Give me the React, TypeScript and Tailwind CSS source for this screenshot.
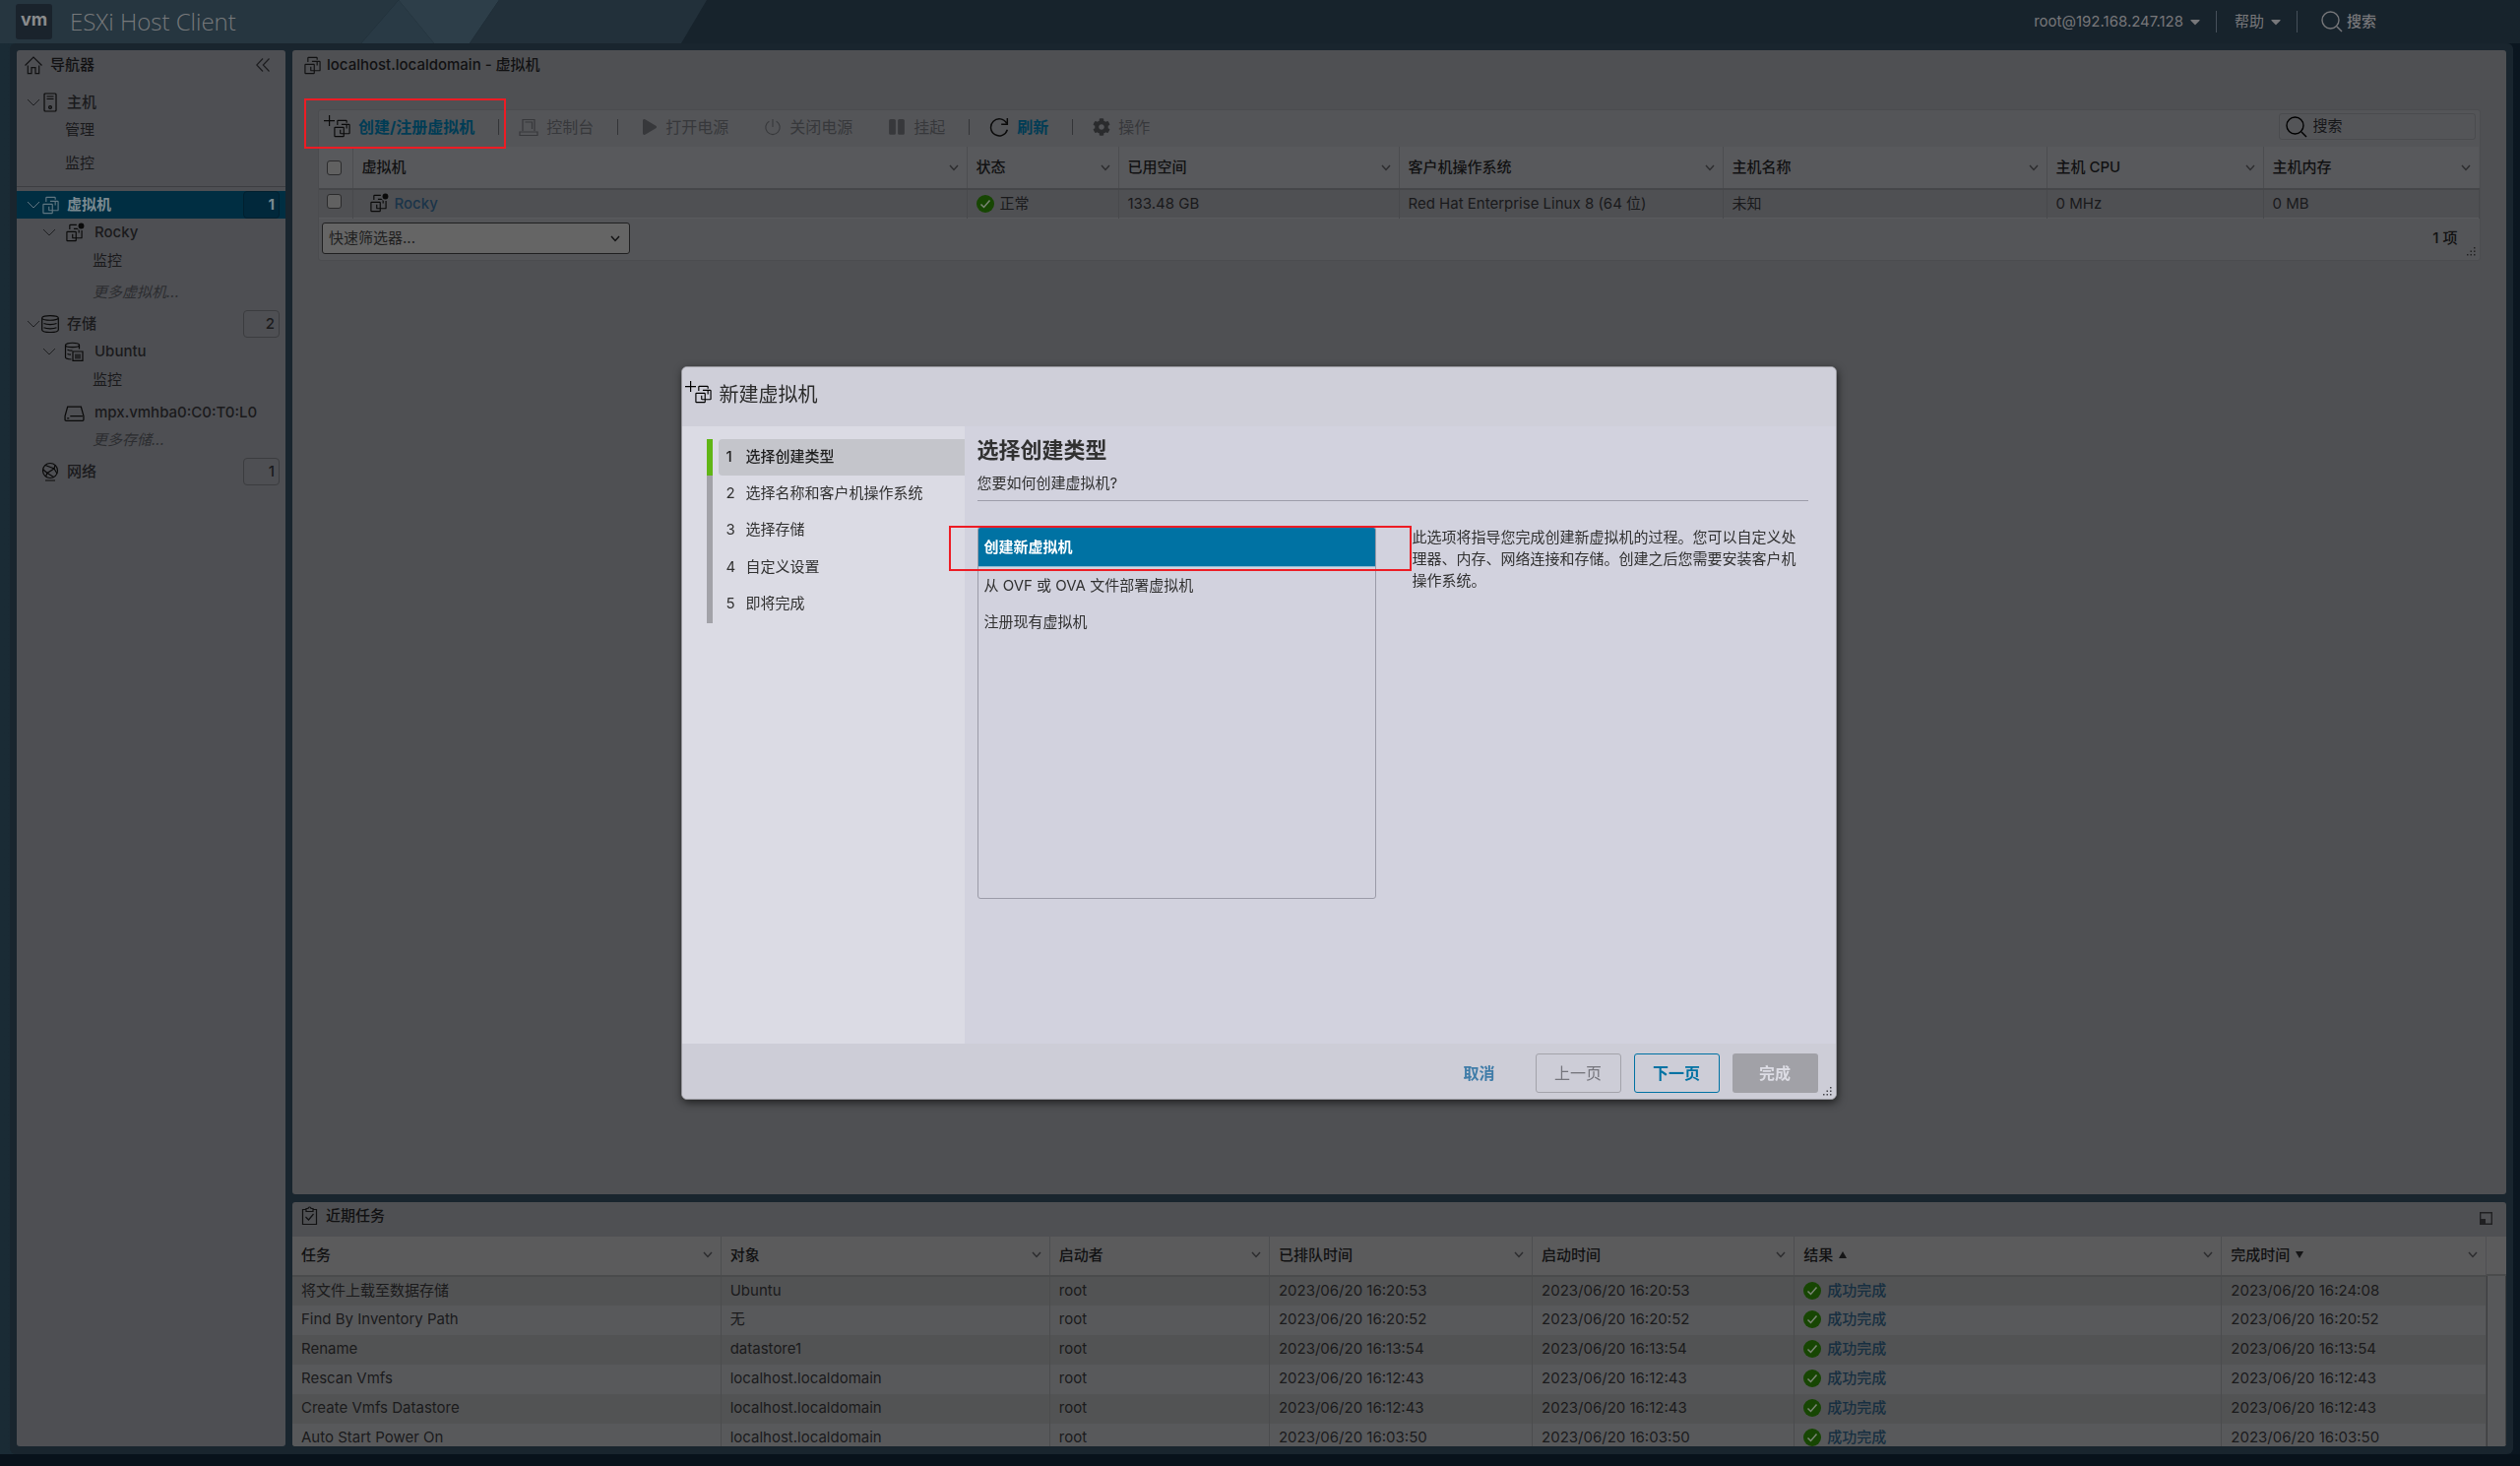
import type { ReactNode } from 'react'
import { FaCaretDown, FaCog, FaPause, FaPlay } from 'react-icons/fa'

const vmColumns = [
  { label: '虚拟机', width: 624 },
  { label: '状态', width: 154 },
  { label: '已用空间', width: 285 },
  { label: '客户机操作系统', width: 329 },
  { label: '主机名称', width: 329 },
  { label: '主机 CPU', width: 220 },
  { label: '主机内存', width: 219 },
]

const taskColumns = [
  { label: '任务', width: 435, sort: '' },
  { label: '对象', width: 334, sort: '' },
  { label: '启动者', width: 223, sort: '' },
  { label: '已排队时间', width: 267, sort: '' },
  { label: '启动时间', width: 266, sort: '' },
  { label: '结果', width: 434, sort: 'asc' },
  { label: '完成时间', width: 268, sort: 'desc' },
]

const tasks = [
  ['将文件上载至数据存储', 'Ubuntu', '16:20:53', '16:24:08'],
  ['Find By Inventory Path', '无', '16:20:52', '16:20:52'],
  ['Rename', 'datastore1', '16:13:54', '16:13:54'],
  ['Rescan Vmfs', 'localhost.localdomain', '16:12:43', '16:12:43'],
  ['Create Vmfs Datastore', 'localhost.localdomain', '16:12:43', '16:12:43'],
  ['Auto Start Power On', 'localhost.localdomain', '16:03:50', '16:03:50'],
]

const steps = [
  '选择创建类型',
  '选择名称和客户机操作系统',
  '选择存储',
  '自定义设置',
  '即将完成',
]

const createTypes = ['创建新虚拟机', '从 OVF 或 OVA 文件部署虚拟机', '注册现有虚拟机']

function VmIcon() {
  return (
    <svg viewBox="0 0 36 36" className="size-[21px] shrink-0" fill="currentColor">
      <path d="M11 5H25V8h2V5a2 2 0 0 0-2-2H11A2 2 0 0 0 9 5v6.85h2Z" />
      <path d="M30 10H17v2h8v6h2V12h3V26H22V17a2 2 0 0 0-2-2H6a2 2 0 0 0-2 2V31a2 2 0 0 0 2 2H20a2 2 0 0 0 2-2V28h8a2 2 0 0 0 2-2V12A2 2 0 0 0 30 10ZM6 31V17H20v9H16V20H14v6a2 2 0 0 0 2 2h4v3Z" />
    </svg>
  )
}

// VM icon with the status dot, the frames are cut away around it
function VmDotIcon() {
  return (
    <svg viewBox="0 0 36 36" className="size-[21px] shrink-0" fill="currentColor">
      <path d="M11 5H22V3H11A2 2 0 0 0 9 5v6.85h2Z" />
      <path d="M23 10H17v2h8v6h2v-4.500h3V26H22V17a2 2 0 0 0-2-2H6a2 2 0 0 0-2 2V31a2 2 0 0 0 2 2H20a2 2 0 0 0 2-2V28h8a2 2 0 0 0 2-2V13.500h-5ZM6 31V17H20v9H16V20H14v6a2 2 0 0 0 2 2h4v3Z" />
      <circle cx="30" cy="6" r="5" />
    </svg>
  )
}

function NewVmIcon() {
  return (
    <svg viewBox="0 0 27 24" className="h-6 w-[27px] shrink-0" fill="currentColor">
      <path d="M5 0h1.200v5H11v1.200H6.200V11H5V6.200H0V5h5Z" />
      <g transform="translate(8 3) scale(.583)">
        <path d="M11 5H25V8h2V5a2 2 0 0 0-2-2H11A2 2 0 0 0 9 5v6.850h2Z" />
        <path d="M30 10H17v2h8v6h2V12h3V26H22V17a2 2 0 0 0-2-2H6a2 2 0 0 0-2 2V31a2 2 0 0 0 2 2H20a2 2 0 0 0 2-2V28h8a2 2 0 0 0 2-2V12A2 2 0 0 0 30 10ZM6 31V17H20v9H16V20H14v6a2 2 0 0 0 2 2h4v3Z" />
      </g>
    </svg>
  )
}

function LineIcon({ children, size = 'size-5' }: { children: ReactNode; size?: string }) {
  return (
    <svg
      viewBox="0 0 20 20"
      className={`shrink-0 ${size}`}
      fill="none"
      stroke="currentColor"
      strokeWidth="1.2"
    >
      {children}
    </svg>
  )
}

function HomeIcon() {
  return (
    <LineIcon>
      <path d="M1.500 10.500 10 2l8.500 8.500M4.300 10.500v8.200h3.700v-6h4v6h3.700v-8.200" />
    </LineIcon>
  )
}

function HostIcon() {
  return (
    <LineIcon>
      <rect x="4" y="1" width="12" height="18" rx="1" />
      <path d="M6.500 4h7M6.500 6.500h7" />
      <circle cx="10" cy="15" r="1.400" />
    </LineIcon>
  )
}

function StorageIcon() {
  return (
    <LineIcon>
      <path d="M1.700 4v12c0 3.300 16.600 3.300 16.600 0V4c0-3.300-16.600-3.300-16.600 0c0 3 16.600 3 16.600 0M3.500 9.500c3 1.400 10 1.400 13 0M3.500 13.800c3 1.400 10 1.400 13 0" />
    </LineIcon>
  )
}

function DatastoreIcon() {
  return (
    <LineIcon>
      <path d="M7.500 18c-3.500-.2-6-1-6-2.300V3.500c0-3 14-3 14 0v4M1.500 3.500c0 2.800 14 2.800 14 0M3.500 8.200c1 .5 3 .9 5 .9M3.500 12.500c1 .4 2 .6 3.500.7" />
      <path d="M9 10h10v9.400H9zM12 12.500v5M14 12.500v5M16 12.500v5" />
    </LineIcon>
  )
}

function DiskIcon() {
  return (
    <LineIcon size="size-[21px]">
      <path d="M3.500 4h13l2.500 9v3.500a1 1 0 0 1-1 1H2a1 1 0 0 1-1-1V13ZM6 13h12M3 15.200h2" />
    </LineIcon>
  )
}

function NetworkIcon() {
  return (
    <LineIcon>
      <circle cx="10" cy="9" r="7.500" />
      <path d="M5 3.500l9 3.500 3 5M14 7l-7 4.500-1.500 3.500M7 11.500 3 8M7 11.500l6.500 4M14 7l1-3.500M5 19h10" />
    </LineIcon>
  )
}

function CheckIcon() {
  return (
    <svg viewBox="0 0 18 18" className="size-[18px] shrink-0">
      <circle cx="9" cy="9" r="9" fill="#174603" />
      <path d="M4.500 9.500 7.500 12.500 13.500 5.500" fill="none" stroke="#7a8574" strokeWidth="1.500" />
    </svg>
  )
}

function SearchIcon() {
  return (
    <svg
      viewBox="0 0 22 22"
      className="size-[22px] shrink-0"
      fill="none"
      stroke="currentColor"
      strokeWidth="1.400"
    >
      <circle cx="9.500" cy="9.500" r="8.500" />
      <path d="m16 16 5 5" />
    </svg>
  )
}

function Chevron() {
  return (
    <svg viewBox="0 0 10 7" className="h-[7px] w-[10px] shrink-0" fill="none" stroke="currentColor">
      <path d="m1 1 4 4.500L9 1" strokeWidth="1.400" />
    </svg>
  )
}

function TreeChevron() {
  return (
    <svg viewBox="0 0 14 8" className="h-2 w-3.5 shrink-0" fill="none" stroke="currentColor">
      <path d="m1 1 6 6 6-6" />
    </svg>
  )
}

function ResizeDots() {
  return (
    <svg viewBox="0 0 9 9" className="size-[9px]" fill="currentColor">
      <path d="M7 0h1.500v1.500H7zM7 3.500h1.500V5H7zM3.500 3.500H5V5H3.500zM7 7h1.500v1.500H7zM3.500 7H5v1.500H3.500zM0 7h1.500v1.500H0z" />
    </svg>
  )
}

type TreeRowProps = {
  label: string
  icon: ReactNode
  open?: boolean
  nested?: boolean
  count?: number
  selected?: boolean
  className?: string
}

function TreeRow({ label, icon, open, nested, count, selected, className = '' }: TreeRowProps) {
  return (
    <li className={className}>
      <a
        href="#"
        className={`flex h-7 items-center pr-1.5 font-medium ${nested ? 'pl-[26px]' : 'pl-2.5'} ${
          selected ? 'bg-[#002e42] text-[#7b8a91]' : 'text-[#1a1a1c]'
        }`}
      >
        <span className={`shrink-0 ${nested ? 'w-[22px]' : 'w-3.5'} ${selected ? 'text-[#5f7681]' : 'text-[#1f2022]'}`}>
          {open && <TreeChevron />}
        </span>
        <span
          className={`flex shrink-0 items-center ${nested ? 'w-[31px]' : 'w-[27px]'} ${
            selected ? 'text-[#5f7681]' : 'text-[#0a0a0a]'
          }`}
        >
          {icon}
        </span>
        <span className={selected ? 'font-bold' : ''}>{label}</span>
        {count !== undefined && (
          <span
            className={`ml-auto h-7 w-[37px] rounded-sm border pr-1 text-right leading-[26px] ${
              selected ? 'border-[#01202f] bg-[#01283b] font-bold' : 'border-[#3b3c3f]'
            }`}
          >
            {count}
          </span>
        )}
      </a>
    </li>
  )
}

type TreeLeafProps = {
  label: string
  more?: boolean
  indent?: string
  className?: string
}

function TreeLeaf({ label, more, indent = 'pl-[77px]', className = '' }: TreeLeafProps) {
  return (
    <li className={className}>
      <a
        href="#"
        className={`flex h-7 items-center ${indent} ${more ? 'text-[#2c2d30] italic' : 'text-[#19191b]'}`}
      >
        {label}
      </a>
    </li>
  )
}

function Navigator() {
  return (
    <nav className="w-[273px] shrink-0 rounded-[3px] bg-[#4e4f53]">
      <div className="flex h-[30px] items-center pl-[7px] pr-4 font-medium">
        <HomeIcon />
        <span className="ml-[7px]">导航器</span>
        <button className="ml-auto" aria-label="折叠">
          <svg viewBox="0 0 14 14" className="size-3.5" fill="none" stroke="#1d1d1f" strokeWidth="1.200">
            <path d="M7 .5.8 7 7 13.500M13.500.5 7.300 7l6.200 6.500" />
          </svg>
        </button>
      </div>
      <ul className="pt-[9px]">
        <TreeRow label="主机" icon={<HostIcon />} open />
        <TreeLeaf label="管理" indent="pl-[49px]" />
        <TreeLeaf label="监控" indent="pl-[49px]" className="mt-1.5" />
        <TreeRow
          label="虚拟机"
          icon={<VmIcon />}
          open
          selected
          count={1}
          className="mt-[9px] border-t border-[#3c3d41] pt-1"
        />
        <TreeRow label="Rocky" icon={<VmDotIcon />} open nested />
        <TreeLeaf label="监控" className="mt-px" />
        <TreeLeaf label="更多虚拟机..." more className="mt-1" />
        <TreeRow label="存储" icon={<StorageIcon />} open count={2} className="mt-1" />
        <TreeRow label="Ubuntu" icon={<DatastoreIcon />} open nested />
        <TreeLeaf label="监控" className="mt-px" />
        <TreeRow label="mpx.vmhba0:C0:T0:L0" icon={<DiskIcon />} nested className="mt-[5px]" />
        <TreeLeaf label="更多存储..." more />
        <TreeRow label="网络" icon={<NetworkIcon />} count={1} className="mt-1" />
      </ul>
    </nav>
  )
}

function Separator() {
  return <span className="h-4 w-px shrink-0 bg-[#333437]" />
}

function VmGrid() {
  return (
    <div className="relative mx-[26px] mt-[30px] rounded-[3px] border border-[#4b4c4f] bg-[#545558]">
      <div className="flex h-[37px] items-center pb-1 pl-[5px] text-base text-[#37383b]">
        <button className="mr-6 flex items-center gap-2 font-bold text-[#003c55]">
          <span className="text-[#0a0a0a]">
            <NewVmIcon />
          </span>
          创建/注册虚拟机
        </button>
        <Separator />
        <button className="mr-6 ml-5 flex items-center gap-2">
          <LineIcon>
            <path d="M4 14V2.500h12V14M1 15h18v3.500H1zM6.500 5h7v7" />
          </LineIcon>
          控制台
        </button>
        <Separator />
        <button className="ml-6 flex items-center gap-2">
          <FaPlay className="size-4" />
          打开电源
        </button>
        <button className="ml-9 flex items-center gap-2">
          <LineIcon size="size-[18px]">
            <path d="M10 1v9M6 3.500a8 8 0 1 0 8 0" />
          </LineIcon>
          关闭电源
        </button>
        <button className="ml-9 mr-6 flex items-center gap-2">
          <FaPause className="size-[18px]" />
          挂起
        </button>
        <Separator />
        <button className="mr-6 ml-5 flex items-center gap-2 font-bold text-[#003c55]">
          <svg viewBox="0 0 18 18" className="size-5" fill="none" stroke="#0a0a0a" strokeWidth="1.300">
            <path d="M16.500 11.500A7.700 7.700 0 1 1 15.800 5.500M16.500 1v5.500H11" />
          </svg>
          刷新
        </button>
        <Separator />
        <button className="ml-5 flex items-center gap-2">
          <FaCog className="size-[18px] text-[#2a2b2d]" />
          操作
        </button>
        <label className="ml-auto mr-1 flex h-[27px] w-[200px] items-center gap-1.5 rounded-[3px] border border-[#4a4b4e] pl-1.5 text-[15px] text-black">
          <SearchIcon />
          <input
            aria-label="搜索"
            placeholder="搜索"
            className="w-32 bg-transparent placeholder:text-[#161618]"
          />
        </label>
      </div>
      <table className="w-full table-fixed">
        <colgroup>
          <col style={{ width: 34 }} />
          {vmColumns.map((column) => (
            <col key={column.label} style={{ width: column.width }} />
          ))}
        </colgroup>
        <thead>
          <tr className="h-[43px] border-b-2 border-[#454649] bg-[#58595c]">
            <th className="border-r border-[#4c4d50] px-2">
              <input
                type="checkbox"
                aria-label="全选"
                className="block size-[15px] appearance-none rounded-[3px] border border-[#2b2b2c] bg-[#616161]"
              />
            </th>
            {vmColumns.map((column) => (
              <th key={column.label} className="border-r border-[#4c4d50] px-2 font-medium last:border-r-0">
                <div className="flex items-center justify-between pl-px">
                  {column.label}
                  <span className="text-[#2c2c2e]">
                    <Chevron />
                  </span>
                </div>
              </th>
            ))}
          </tr>
        </thead>
        <tbody>
          <tr className="h-[29px] border-b border-[#5a5b5e] bg-[#4f5053] leading-4 text-[#19191b] [&>td]:border-r [&>td]:border-[#48494c] [&>td]:px-[9px]">
            <td>
              <input
                type="checkbox"
                aria-label="Rocky"
                className="-ml-px mb-1 block size-[15px] appearance-none rounded-[3px] border border-[#2b2b2c] bg-[#616161]"
              />
            </td>
            <td>
              <a href="#" className="flex items-center gap-1.5 pl-1.5 font-medium text-[#1b3449]">
                <span className="text-[#0a0a0a]">
                  <VmDotIcon />
                </span>
                Rocky
              </a>
            </td>
            <td>
              <div className="flex items-center gap-1.5">
                <CheckIcon />
                正常
              </div>
            </td>
            <td>133.48 GB</td>
            <td>Red Hat Enterprise Linux 8 (64 位)</td>
            <td>未知</td>
            <td>0 MHz</td>
            <td>0 MB</td>
          </tr>
        </tbody>
      </table>
      <div className="flex h-[42px] items-center justify-between pr-[22px] pb-0.5 pl-[3px]">
        <div className="relative">
          <select
            aria-label="快速筛选器"
            className="block h-8 w-[313px] appearance-none rounded-[3px] border border-[#202021] bg-[#656565] pl-1.5 text-[#1f1f1f]"
          >
            <option>快速筛选器...</option>
          </select>
          <span className="pointer-events-none absolute top-[13px] right-2.5">
            <Chevron />
          </span>
        </div>
        <span className="font-medium">1 项</span>
      </div>
      <span className="absolute right-1 bottom-1 text-[#222]">
        <ResizeDots />
      </span>
    </div>
  )
}

function TaskPanel() {
  return (
    <section className="flex h-[248px] flex-col overflow-hidden rounded-[3px] bg-[#4f5053]">
      <div className="flex h-[35px] shrink-0 items-center pr-[14px] pb-2 pl-2 font-medium">
        <LineIcon>
          <path d="M6.500 3.500H2.500v15h14v-15h-4M6 2.500h2c0-2 3-2 3 0h2v3H6zM5.500 11l3 3 5-6" />
        </LineIcon>
        <h2 className="ml-1.5">近期任务</h2>
        <button className="ml-auto pt-1.5" aria-label="最小化">
          <svg viewBox="0 0 13 13" className="size-[13px]">
            <path d="M.7.7h11.600v11.600H.7z" fill="none" stroke="#202022" strokeWidth="1.400" />
            <path d="M0 7h6v6H0z" fill="#202022" />
          </svg>
        </button>
      </div>
      <div className="flex min-h-0 flex-1 items-stretch">
        <table className="w-full table-fixed self-start">
          <colgroup>
            {taskColumns.map((column) => (
              <col key={column.label} style={{ width: column.width }} />
            ))}
          </colgroup>
          <thead>
            <tr className="h-10 border-b-2 border-[#4a4b4c] bg-[#5b5b5c]">
              {taskColumns.map((column) => (
                <th key={column.label} className="border-r border-[#4d4e50] pr-2 pb-0.5 pl-[9px] font-medium last:border-r-0">
                  <div className="flex items-center">
                    {column.label}
                    {column.sort === 'asc' && (
                      <svg viewBox="0 0 8 7" className="ml-1.5 h-[7px] w-2" fill="#151516">
                        <path d="M4 0l4 7H0z" />
                      </svg>
                    )}
                    {column.sort === 'desc' && (
                      <svg viewBox="0 0 8 7" className="ml-1.5 h-[7px] w-2" fill="#151516">
                        <path d="M4 7l4-7H0z" />
                      </svg>
                    )}
                    <span className="ml-auto text-[#2c2c2e]">
                      <Chevron />
                    </span>
                  </div>
                </th>
              ))}
            </tr>
          </thead>
          <tbody>
            {tasks.map(([name, target, started, finished]) => (
              <tr
                key={name}
                className="h-[30px] bg-[#58595b] leading-4 text-[#1a1a1b] odd:bg-[#525354] [&>td]:border-r [&>td]:border-[#4b4c4e] [&>td]:px-[9px] [&>td]:pb-0.5"
              >
                <td>{name}</td>
                <td>{target}</td>
                <td>root</td>
                <td>2023/06/20 {started}</td>
                <td>2023/06/20 {started}</td>
                <td>
                  <a href="#" className="flex items-center gap-1.5 font-medium text-[#172f41]">
                    <CheckIcon />
                    成功完成
                  </a>
                </td>
                <td>2023/06/20 {finished}</td>
              </tr>
            ))}
          </tbody>
        </table>
        <div className="flex w-5 shrink-0 flex-col">
          <div className="h-10 border-b-2 border-[#4a4b4c] bg-[#5b5b5c]" />
          <div className="flex-1 border-x border-[#3d3e40] bg-[#57585a]" />
        </div>
      </div>
    </section>
  )
}

function Header() {
  return (
    <header className="relative flex h-11 shrink-0 items-center bg-[#17232c] pl-4 text-[#77777a]">
      <svg viewBox="0 0 720 44" className="absolute top-0 left-0 h-11 w-[720px]">
        <path d="M0 0h405l-38 44H0z" fill="#263640" />
        <path d="M405 0l36 44h-74z" fill="#293a45" />
        <path d="M405 0h102l-30 44h-36z" fill="#2d3e49" />
        <path d="M507 0h211l-26 44H477z" fill="#22303a" />
      </svg>
      <div className="relative flex h-9 w-[37px] items-center justify-center rounded-[3px] bg-[#1a232c] pb-1 text-lg font-bold text-[#8a8b8c]">
        vm
      </div>
      <h1 className="relative ml-[18px] font-['Open_Sans'] text-2xl font-light text-[#77797b]">ESXi Host Client</h1>
      <div className="ml-auto flex items-center">
        <button className="flex items-center gap-[7px]">
          root@192.168.247.128
          <FaCaretDown className="h-4 w-2.5" />
        </button>
        <span className="mr-[18px] ml-4 h-[22px] w-px bg-[#46505a]" />
        <button className="flex items-center gap-[7px]">
          帮助
          <FaCaretDown className="h-4 w-2.5" />
        </button>
        <span className="mr-6 ml-4 h-[22px] w-px bg-[#46505a]" />
        <label className="flex items-center gap-1">
          <SearchIcon />
          <input
            aria-label="全局搜索"
            placeholder="搜索"
            className="w-44 bg-transparent placeholder:font-medium placeholder:text-[#77777a]"
          />
        </label>
      </div>
    </header>
  )
}

function NewVmDialog() {
  return (
    <div
      role="dialog"
      aria-labelledby="dialog-title"
      className="relative flex h-[745px] w-[1174px] flex-col overflow-hidden rounded-md border border-[#97979d] bg-[#d2d2de] text-[#313131] shadow-[1px_3px_8px_rgba(0,0,0,0.6)]"
    >
      <div className="flex h-[60px] shrink-0 items-center gap-2 bg-[#cfcfd9] pb-1 pl-[3px]">
        <span className="pb-1 text-black">
          <NewVmIcon />
        </span>
        <h2 id="dialog-title" className="text-xl text-[#2b2b2b]">
          新建虚拟机
        </h2>
      </div>
      <div className="flex flex-1">
        <aside className="w-[287px] shrink-0 bg-[#dbdbe4] pt-[13px] pl-[25px]">
          <ol className="grid h-[187px] grid-rows-5">
            {steps.map((step, index) => (
              <li
                key={step}
                className={`flex border-l-6 ${index === 0 ? 'border-[#60b515]' : 'border-[#a2a2a8]'}`}
              >
                <button
                  className={`ml-1.5 flex flex-1 items-center rounded-l-sm pl-2 pb-0.5 ${
                    index === 0 ? 'bg-[#c4c5cb] font-medium text-[#1f1f1f]' : ''
                  }`}
                >
                  <span className="w-5 text-left">{index + 1}</span>
                  {step}
                </button>
              </li>
            ))}
          </ol>
        </aside>
        <div className="flex-1 pt-2 pr-7 pl-[13px]">
          <h3 className="h-8 text-[22px] leading-8 font-bold">选择创建类型</h3>
          <p className="h-[36px] border-b border-[#9d9daa] pt-2">您要如何创建虚拟机?</p>
          <div className="flex gap-[37px] pt-[26px]">
            <ul role="listbox" className="h-[378px] w-[405px] shrink-0 rounded-[3px] border border-[#9b9ba8]">
              {createTypes.map((type, index) => (
                <li key={type} role="option" aria-selected={index === 0}>
                  <button
                    className={`flex w-full items-center px-1.5 ${
                      index === 0
                        ? 'h-10 rounded-t-xs border-b border-[#8fbdd6] bg-[#0072a3] font-bold text-white'
                        : 'h-[37px]'
                    }`}
                  >
                    {type}
                  </button>
                </li>
              ))}
            </ul>
            <p className="leading-[22px]">
              此选项将指导您完成创建新虚拟机的过程。您可以自定义处理器、内存、网络连接和存储。创建之后您需要安装客户机操作系统。
            </p>
          </div>
        </div>
      </div>
      <div className="flex h-[56px] shrink-0 items-center justify-end gap-[13px] bg-[#cdcdd7] pt-1 pr-[18px] text-base">
        <button className="mr-7 font-bold text-[#3f7ca8]">取消</button>
        <button disabled className="h-10 w-[87px] rounded-[3px] border border-[#a3a3aa] text-[#75757c]">
          上一页
        </button>
        <button className="h-10 w-[87px] rounded-[3px] border border-[#0072a3] font-bold text-[#0072a3]">
          下一页
        </button>
        <button disabled className="h-10 w-[87px] rounded-[3px] bg-[#a1a1a7] font-bold text-[#dcdce4]">
          完成
        </button>
      </div>
      <span className="absolute right-1 bottom-[3px] text-[#44444a]">
        <ResizeDots />
      </span>
      <span className="pointer-events-none absolute top-[161px] left-[271px] h-[46px] w-[470px] border-2 border-[#ed1c24]" />
    </div>
  )
}

export default function App() {
  return (
    <div className="relative flex h-screen flex-col overflow-hidden bg-[#08121b] pb-3 font-[Inter,'Noto_Sans_CJK_SC',sans-serif] text-[15px] leading-5 text-[#111112]">
      <Header />
      <div className="flex min-h-0 flex-1 bg-linear-to-r from-[#1a2b35] to-[#0b1620] pr-[11px] pl-2.5">
        <div className="flex min-h-0 flex-1 gap-[7px] rounded-md bg-[#19252e] px-[7px] pt-[7px] pb-2">
          <Navigator />
          <main className="flex min-w-0 flex-1 flex-col gap-2">
            <section className="min-h-0 flex-1 rounded-[3px] bg-[#4f5053]">
              <div className="flex h-[30px] items-center gap-1 pl-2.5 font-medium">
                <VmIcon />
                <h2>localhost.localdomain - 虚拟机</h2>
              </div>
              <VmGrid />
            </section>
            <TaskPanel />
          </main>
        </div>
      </div>
      <span className="pointer-events-none absolute top-[100px] left-[309px] h-[51px] w-[205px] border-2 border-[#ed1c24]" />
      <div className="fixed inset-0 flex items-center justify-center pr-[3px]">
        <NewVmDialog />
      </div>
    </div>
  )
}
